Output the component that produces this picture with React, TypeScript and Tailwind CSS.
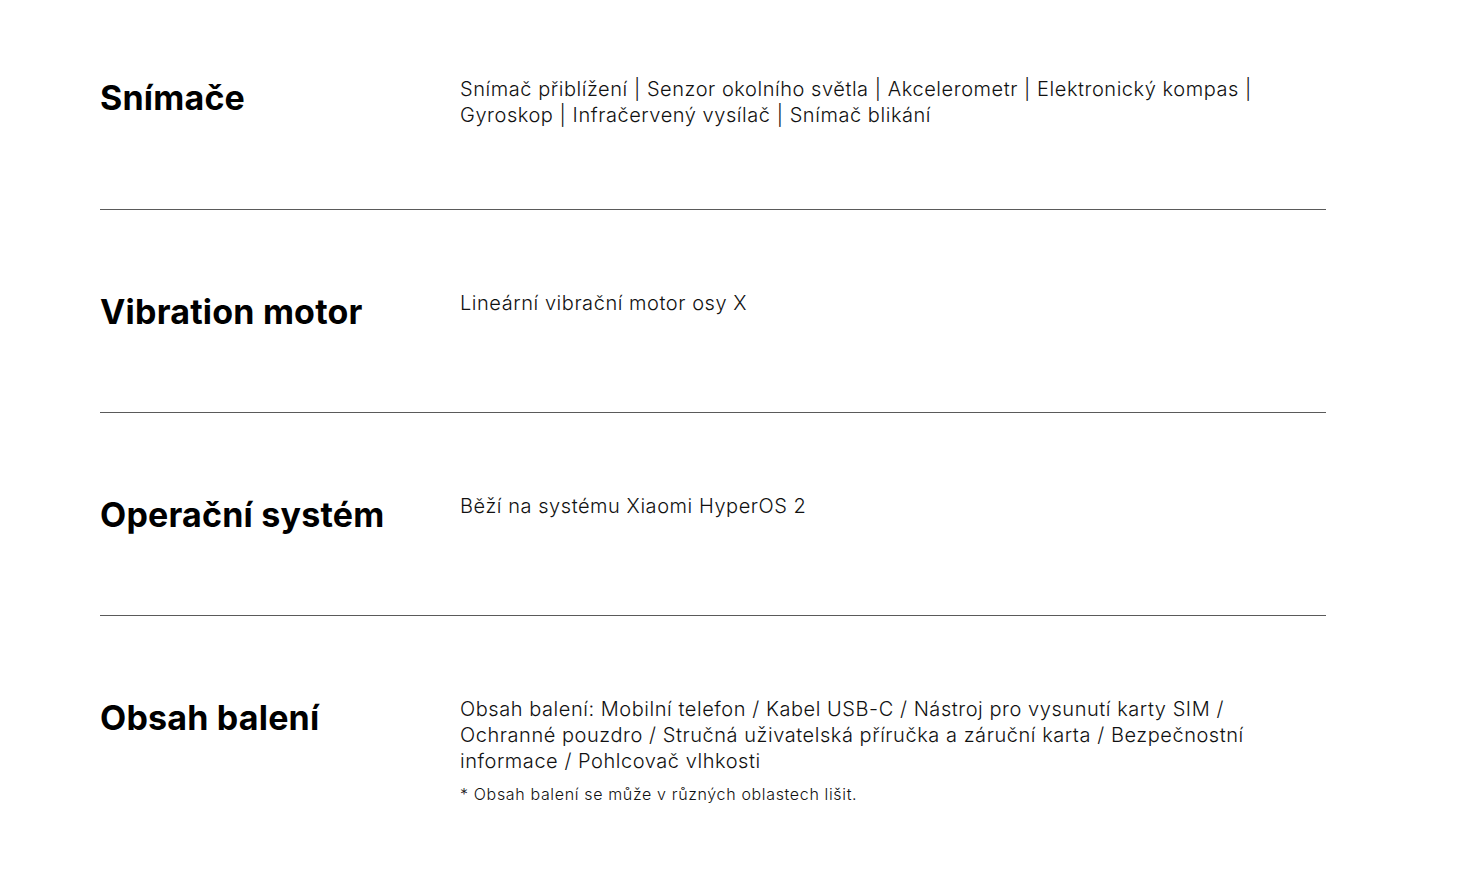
const rows = [
  {
    title: 'Snímače',
    body: 'Snímač přiblížení | Senzor okolního světla | Akcelerometr | Elektronický kompas | Gyroskop | Infračervený vysílač | Snímač blikání',
  },
  { title: 'Vibration motor', body: 'Lineární vibrační motor osy X' },
  { title: 'Operační systém', body: 'Běží na systému Xiaomi HyperOS 2' },
  {
    title: 'Obsah balení',
    body: 'Obsah balení: Mobilní telefon / Kabel USB-C / Nástroj pro vysunutí karty SIM / Ochranné pouzdro / Stručná uživatelská příručka a záruční karta / Bezpečnostní informace / Pohlcovač vlhkosti',
    note: '* Obsah balení se může v různých oblastech lišit.',
  },
];

export default function App() {
  return (
    <div className="min-h-[882px] bg-white text-black font-['Inter',sans-serif]">
      <div className="w-[1226px] ml-[100px] mt-[-4px]">
        {rows.map((row, i) => (
          <div
            key={row.title}
            className={
              i === 0
                ? 'flex items-start h-[213px] pt-[80px]'
                : 'flex items-start h-[203px] pt-[80px] border-t border-[#5a5a5a]'
            }
          >
            <h3 className="w-[360px] shrink-0 text-[34px] leading-[44px] font-bold tracking-[0.2px]">
              {row.title}
            </h3>
            <div className="w-[800px]">
              <p className="text-[20px] leading-[26px] font-light tracking-[0.55px] text-[#111]">{row.body}</p>
              {row.note && (
                <p className="mt-[10px] text-[16px] leading-[20px] font-light tracking-[0.65px] text-[#111]">
                  {row.note}
                </p>
              )}
            </div>
          </div>
        ))}
      </div>
    </div>
  );
}
